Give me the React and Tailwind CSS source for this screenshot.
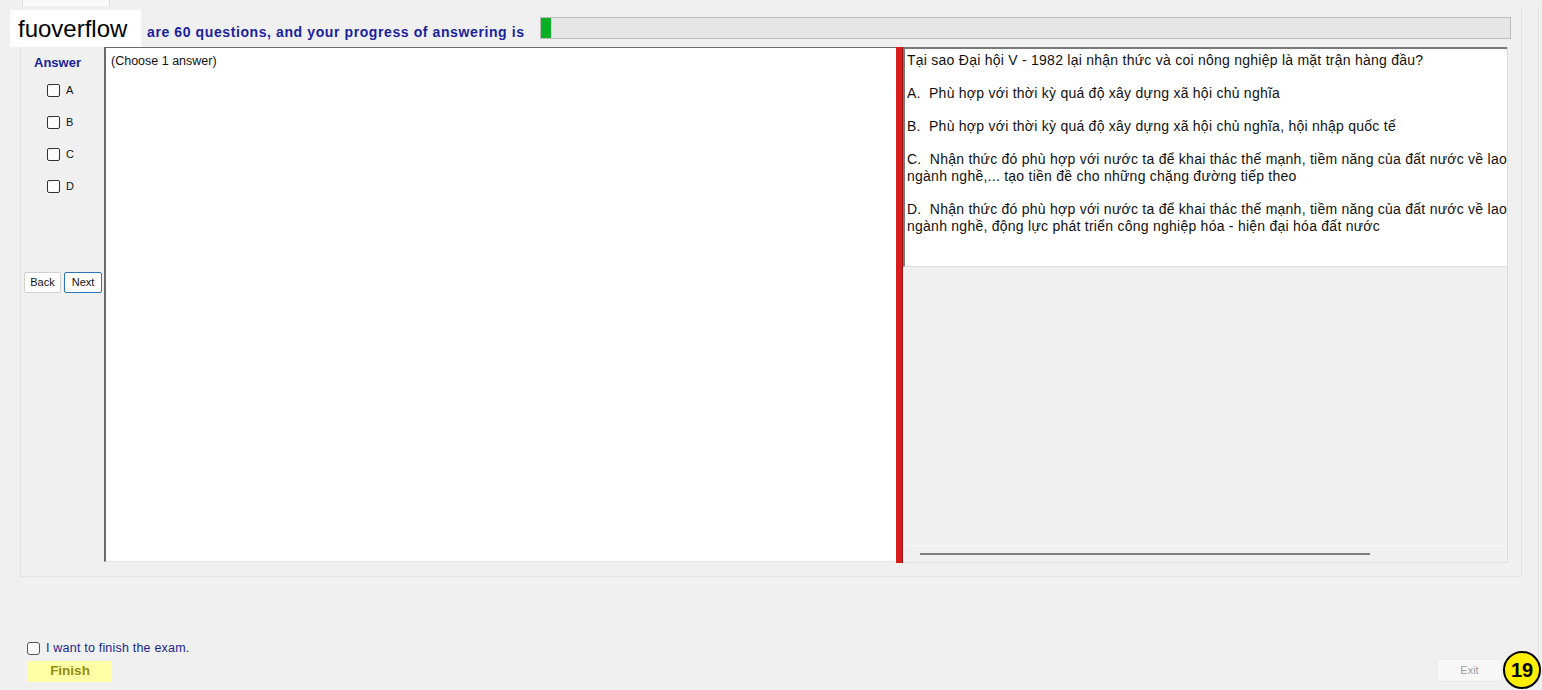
import React from 'react';

const answers = ['A', 'B', 'C', 'D'];

const Box = ({ className = '' }) => (
    <span className={`inline-block w-[13px] h-[13px] rounded-[2px] border border-[#333] bg-white ${className}`}></span>
);

export default function App() {
    return (
        <div className="relative w-[1542px] h-[690px] overflow-hidden bg-[#f0f0f0] font-['Liberation_Sans',Arial,sans-serif]">
            {/* tab strip */}
            <div className="h-[6px] flex">
                <div className="ml-[22px] w-[88px] h-[6px] bg-[#fafafa] border-x border-[#d9d9d9]"></div>
            </div>

            {/* tab page */}
            <div className="mx-[3px] h-[681px] bg-[#f0f0f0] border-r border-[#e2e2e2] flex flex-col">
                {/* group box */}
                <div className="ml-[17px] mr-[16px] mt-[2px] h-[569px] border border-[#e3e3e3] border-t-0 bg-[#f0f0f0] flex flex-col">
                    {/* header */}
                    <div className="h-[39px] flex items-start">
                        <div className="ml-[126px] mt-[16px] text-[14px] tracking-[0.6px] font-bold text-[#1a1f9c] whitespace-nowrap leading-[16px]">
                            are 60 questions, and your progress of answering is
                        </div>
                        <div className="ml-[15px] mt-[9px] w-[971px] h-[22px] bg-[#e6e6e6] border border-[#bcbcbc] flex">
                            <div className="w-[10px] h-full bg-[#06b025]"></div>
                        </div>
                    </div>

                    {/* main row */}
                    <div className="flex h-[516px]">
                        {/* answer column */}
                        <div className="ml-[3px] w-[78px] flex flex-col">
                            <div className="mt-[8px] ml-[10px] text-[13px] font-bold text-[#1a1f9c] leading-[16px]">Answer</div>
                            <div className="flex flex-col gap-[19px] mt-[13px] ml-[23px]">
                                {answers.map((a) => (
                                    <div key={a} className="flex items-center h-[13px]">
                                        <Box />
                                        <span className="ml-[6px] text-[11px] text-[#111] leading-[13px]">{a}</span>
                                    </div>
                                ))}
                            </div>
                            <div className="flex gap-[3px] mt-[79px]">
                                <button className="w-[37px] h-[21px] bg-white border border-[#d0d0d0] rounded-[2px] text-[11px] text-[#111]">Back</button>
                                <button className="w-[38px] h-[21px] bg-white border border-[#2f73b8] rounded-[2px] text-[11px] text-[#111]">Next</button>
                            </div>
                        </div>

                        {/* question textarea */}
                        <div className="ml-[2px] w-[792px] h-[515px] bg-white border-l-2 border-t border-[#6a6a6a] border-b border-b-[#e6e6e6] px-[5px] pt-[6px]">
                            <div className="text-[12.5px] text-[#111] leading-[14px]">(Choose 1 answer)</div>
                        </div>

                        {/* splitter */}
                        <div className="w-[7px] h-[516px] bg-[#d81b1b] border-r border-[#9b1010]"></div>

                        {/* right panel */}
                        <div className="w-[605px] h-[516px] flex flex-col border-r border-[#dcdcdc]">
                            <div className="h-[220px] bg-white border-t-2 border-t-[#7a7a7a] border-l-2 border-l-[#7a7a7a] border-b border-b-[#dedede] overflow-hidden pl-[2px] pt-[3px] text-[14px] tracking-[0.25px] leading-[17px] text-[#111] whitespace-nowrap">
                                <div>Tại sao Đại hội V - 1982 lại nhận thức và coi nông nghiệp là mặt trận hàng đầu?</div>
                                <div className="mt-[16px]">A.&nbsp; Phù hợp với thời kỳ quá độ xây dựng xã hội chủ nghĩa</div>
                                <div className="mt-[16px]">B.&nbsp; Phù hợp với thời kỳ quá độ xây dựng xã hội chủ nghĩa, hội nhập quốc tế</div>
                                <div className="mt-[16px]">C.&nbsp; Nhận thức đó phù hợp với nước ta để khai thác thế mạnh, tiềm năng của đất nước về lao</div>
                                <div>ngành nghề,... tạo tiền đề cho những chặng đường tiếp theo</div>
                                <div className="mt-[16px]">D.&nbsp; Nhận thức đó phù hợp với nước ta để khai thác thế mạnh, tiềm năng của đất nước về lao</div>
                                <div>ngành nghề, động lực phát triển công nghiệp hóa - hiện đại hóa đất nước</div>
                            </div>
                            <div className="flex-1 bg-[#f0f0f0]"></div>
                            <div className="h-[18px] border-t border-[#fafafa] border-b border-b-[#e2e2e2] flex items-center pl-[17px]">
                                <div className="w-[450px] h-[2px] bg-[#808080]"></div>
                            </div>
                        </div>
                    </div>
                </div>

                {/* bottom */}
                <div className="flex-1 flex items-end justify-between pb-[5px]">
                    <div className="ml-[24px] flex flex-col">
                        <div className="flex items-center">
                            <Box className="rounded-[3px] border-[#555]" />
                            <span className="ml-[6px] text-[12.5px] tracking-[0.2px] text-[#1a1f8c] leading-[14px]">I want to finish the exam.</span>
                        </div>
                        <div className="mt-[6px] ml-[1px] w-[84px] h-[21px] bg-[#ffffa6] flex items-center justify-center text-[13.5px] font-bold text-[#8e8e10]">
                            Finish
                        </div>
                    </div>
                    <div className="mr-[36px] w-[65px] h-[23px] bg-[#f7f7f7] border border-[#ececec] flex items-center justify-center text-[11px] text-[#a0a0a0]">
                        Exit
                    </div>
                </div>
            </div>

            {/* watermark */}
            <div className="absolute left-[10px] top-[10px] w-[131px] h-[37px] bg-white flex items-center pl-[8px] text-[24px] text-black leading-none">
                fuoverflow
            </div>

            {/* badge */}
            <div className="absolute left-[1503px] top-[651px] w-[38px] h-[38px] rounded-full bg-[#ffee00] border-2 border-black flex items-center justify-center text-[20px] font-bold text-black leading-none">
                19
            </div>
        </div>
    );
}
